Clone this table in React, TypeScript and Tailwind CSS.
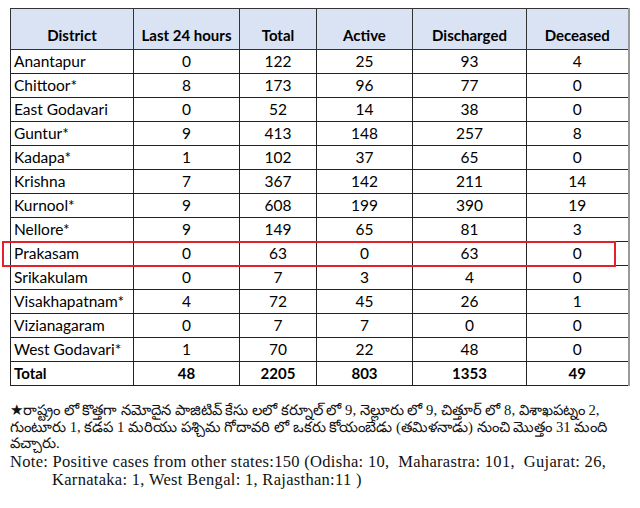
import React from "react";

const rows: [string, string, string, string, string, string][] = [
  ["Anantapur", "0", "122", "25", "93", "4"],
  ["Chittoor*", "8", "173", "96", "77", "0"],
  ["East Godavari", "0", "52", "14", "38", "0"],
  ["Guntur*", "9", "413", "148", "257", "8"],
  ["Kadapa*", "1", "102", "37", "65", "0"],
  ["Krishna", "7", "367", "142", "211", "14"],
  ["Kurnool*", "9", "608", "199", "390", "19"],
  ["Nellore*", "9", "149", "65", "81", "3"],
  ["Prakasam", "0", "63", "0", "63", "0"],
  ["Srikakulam", "0", "7", "3", "4", "0"],
  ["Visakhapatnam*", "4", "72", "45", "26", "1"],
  ["Vizianagaram", "0", "7", "7", "0", "0"],
  ["West Godavari*", "1", "70", "22", "48", "0"],
];

const headers = ["District", "Last 24 hours", "Total", "Active", "Discharged", "Deceased"];
const widths = ["w-[123px]", "w-[106px]", "w-[77px]", "w-[96px]", "w-[114px]", "w-[102px]"];

export default function App() {
  return (
    <div className="relative w-[640px] h-[508px] bg-white text-black overflow-hidden">
      <div className="pt-[8px] pl-[10px]">
        <table className="table-fixed border-collapse w-[618px] font-['Lato',sans-serif] text-[15.5px] leading-none">
          <colgroup>
            {widths.map((w, i) => (
              <col key={i} className={w} />
            ))}
          </colgroup>
          <thead>
            <tr className="h-[41px] bg-[#dae3f3]">
              {headers.map((h, i) => (
                <th
                  key={h}
                  className={`border border-[#333] ${i === 5 ? "border-r-[#9a9a9a] border-r-2" : ""} align-bottom pb-[6px] text-center font-bold text-[15px]`}
                >
                  {h}
                </th>
              ))}
            </tr>
          </thead>
          <tbody>
            {rows.map((r) => (
              <tr key={r[0]} className="h-[24px]">
                {r.map((c, i) => (
                  <td
                    key={i}
                    className={`border border-[#222] ${i === 5 ? "border-r-[#9a9a9a] border-r-2" : ""} ${i === 0 ? "text-left pl-[3px]" : "text-center"} align-middle`}
                  >
                    {c}
                  </td>
                ))}
              </tr>
            ))}
            <tr className="h-[24px] font-bold text-[15px]">
              {["Total", "48", "2205", "803", "1353", "49"].map((c, i) => (
                <td
                  key={i}
                  className={`border border-[#222] ${i === 5 ? "border-r-[#9a9a9a] border-r-2" : ""} ${i === 0 ? "text-left pl-[3px]" : "text-center"} align-middle`}
                >
                  {c}
                </td>
              ))}
            </tr>
          </tbody>
        </table>
      </div>

      <div className="absolute left-[2px] top-[241px] w-[614px] h-[26px] border-2 border-[#e3202c]" />

      <div className="mt-[16px] pl-[10px] pr-[4px] font-['Liberation_Serif','Noto_Sans',serif] text-[#111]">
        <div className="text-[14.7px] leading-[16.5px] whitespace-nowrap">
          <p>★రాష్ట్రం లో కొత్తగా నమోదైన పాజిటివ్ కేసు లలో కర్నూల్ లో 9, నెల్లూరు లో 9, చిత్తూర్ లో 8, విశాఖపట్నం 2,</p>
          <p>గుంటూరు 1, కడప 1 మరియు పశ్చిమ గోదావరి లో ఒకరు కోయంబేడు (తమిళనాడు) నుంచి మొత్తం 31 మంది</p>
          <p>వచ్చారు.</p>
        </div>
        <div className="mt-[1px] text-[16.5px] leading-[18px] tracking-[0.3px] whitespace-nowrap">
          <p>Note: Positive cases from other states:150 (Odisha: 10,&nbsp; Maharastra: 101,&nbsp; Gujarat: 26,</p>
          <p className="pl-[42px]">Karnataka: 1, West Bengal: 1, Rajasthan:11 )</p>
        </div>
      </div>
    </div>
  );
}
